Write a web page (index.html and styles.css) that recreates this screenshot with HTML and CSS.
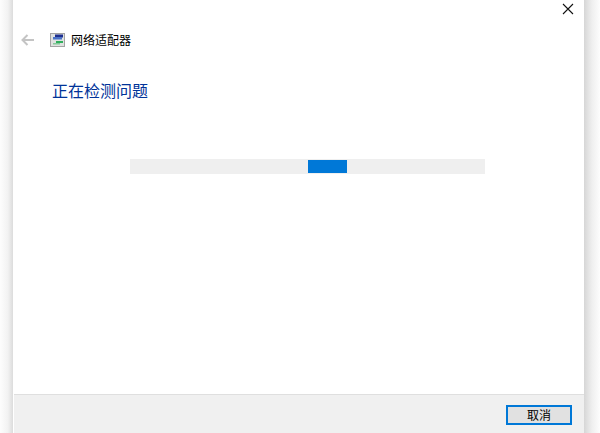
FILE: index.html
```html
<!DOCTYPE html>
<html lang="zh-CN">
<head>
<meta charset="utf-8">
<title>网络适配器</title>
<link rel="stylesheet" href="styles.css">
</head>
<body>
<div class="desktop">
  <div class="shadow shadow-left"></div>
  <main class="window">
    <div class="close-row">
      <svg class="close" width="12" height="12" viewBox="0 0 12 12"><path d="M1 1 L11 11 M11 1 L1 11" stroke="#111" stroke-width="1.1" fill="none"/></svg>
    </div>
    <div class="nav">
      <svg class="back" width="14" height="12" viewBox="0 0 14 12"><path d="M6.5 1 L1.5 6 L6.5 11 M1.5 6 H13" stroke="#c4c4c4" stroke-width="2" fill="none"/></svg>
      <svg class="app-icon" width="15" height="14" viewBox="0 0 15 14">
        <rect x="0.5" y="0.5" width="14" height="13" fill="#dfe2e0" stroke="#a3a3a3"/>
        <rect x="5" y="1.5" width="8" height="3" fill="#1f2f8e"/>
        <rect x="3" y="4" width="9" height="2.5" fill="#4a72c8"/>
        <rect x="6" y="8" width="7" height="2" fill="#2fae5c"/>
        <rect x="3" y="10" width="7" height="1.5" fill="#86c79a"/>
      </svg>
      <span class="app-title">网络适配器</span>
    </div>
    <h1 class="heading">正在检测问题</h1>
    <div class="progress"><div class="progress-fill"></div></div>
    <footer class="footer">
      <button class="cancel" type="button">取消</button>
    </footer>
  </main>
  <div class="shadow shadow-right"></div>
</div>
</body>
</html>
```
FILE: styles.css
```css
* { box-sizing: border-box; }
html, body { margin: 0; padding: 0; height: 100%; overflow: hidden; background: #fff; }
body { font-family: "Noto Sans CJK SC", "Microsoft YaHei", sans-serif; }
.desktop { display: flex; width: 600px; height: 433px; }
.shadow { height: 100%; }
.shadow-left { width: 13px; background: linear-gradient(to right, #fdfdfd, #f2f2f2 60%, #dcdcdc); }
.shadow-right { width: 16px; background: linear-gradient(to right, #d6d6d6, #efefef 50%, #fdfdfd); }
.window { width: 571px; height: 433px; background: #fff; display: flex; flex-direction: column; }
.close-row { height: 27px; display: flex; justify-content: flex-end; align-items: flex-start; padding: 3px 10px 0 0; }
.nav { height: 26px; display: flex; align-items: center; padding-left: 8px; }
.back { margin-right: 15px; }
.app-icon { margin-right: 6px; }
.app-title { font-size: 12px; line-height: 16px; color: #000; }
.heading { margin: 26px 0 0 39px; font-size: 16px; line-height: 22px; font-weight: 400; color: #003399; }
.progress { margin: 58px 0 0 117px; width: 355px; height: 15px; background: #efefef; padding: 1px 0 0 178px; }
.progress-fill { width: 39px; height: 13px; background: #0078d7; }
.footer { margin-top: auto; height: 39px; background: #f0f0f0; border-top: 1px solid #dfdfdf; margin-left: 1px; display: flex; justify-content: flex-end; align-items: flex-start; padding: 10px 12px 0 0; }
.cancel { width: 66px; height: 20px; padding: 0; border: 2px solid #0078d7; background: #e1e1e1; color: #000; font: 12px/16px "Noto Sans CJK SC", sans-serif; }
```
